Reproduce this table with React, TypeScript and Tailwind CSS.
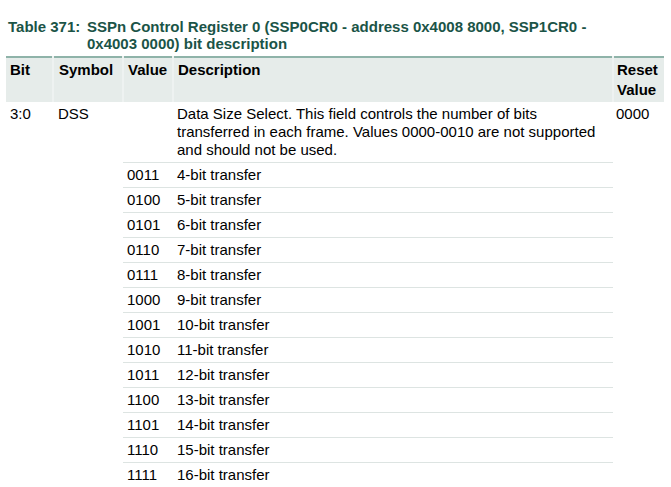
const rows: [string, string][] = [
  ['0011', '4-bit transfer'],
  ['0100', '5-bit transfer'],
  ['0101', '6-bit transfer'],
  ['0110', '7-bit transfer'],
  ['0111', '8-bit transfer'],
  ['1000', '9-bit transfer'],
  ['1001', '10-bit transfer'],
  ['1010', '11-bit transfer'],
  ['1011', '12-bit transfer'],
  ['1100', '13-bit transfer'],
  ['1101', '14-bit transfer'],
  ['1110', '15-bit transfer'],
  ['1111', '16-bit transfer'],
];

export default function App() {
  return (
    <div className="min-h-screen bg-white pl-[6px] pt-[18px] text-[15px] leading-[18px] text-black" style={{ fontFamily: '"Liberation Sans", Arial, sans-serif' }}>
      {/* Caption */}
      <div className="flex pl-[2px] font-bold text-[#1b5447] leading-[17px]">
        <span className="w-[79px] shrink-0">Table 371:</span>
        <span className="w-[520px]">
          SSPn Control Register 0 (SSP0CR0 - address 0x4008 8000, SSP1CR0 - 0x4003 0000) bit description
        </span>
      </div>

      {/* Table */}
      <table className="mt-[4px] w-[658px] table-fixed border-collapse">
        <colgroup>
          <col className="w-[47px]" />
          <col className="w-[70px]" />
          <col className="w-[50px]" />
          <col className="w-[440px]" />
          <col className="w-[51px]" />
        </colgroup>
        <thead>
          <tr className="border-t-2 border-[#8fb3a9] bg-[#e6ecea] align-top font-bold leading-[20px]">
            <th className="border-r-2 border-[#eef2f1] pl-[4px] pt-[2px] pb-[2px] text-left">Bit</th>
            <th className="border-r-2 border-[#eef2f1] pl-[5px] pt-[2px] pb-[2px] text-left">Symbol</th>
            <th className="border-r-2 border-[#eef2f1] pl-[4px] pt-[2px] pb-[2px] text-left">Value</th>
            <th className="border-r-2 border-[#eef2f1] pl-[4px] pt-[2px] pb-[2px] text-left">Description</th>
            <th className="pl-[3px] pt-[2px] pb-[2px] text-left">Reset Value</th>
          </tr>
        </thead>
        <tbody>
          <tr className="align-top">
            <td rowSpan={14} className="pl-[4px] pt-[3px]">3:0</td>
            <td rowSpan={14} className="pl-[5px] pt-[3px]">DSS</td>
            <td className="border-b border-[#dde4e2] pl-[4px] pt-[3px] pb-[3px]"></td>
            <td className="border-b border-[#dde4e2] pl-[4px] pr-[8px] pt-[3px] pb-[3px]">
              Data Size Select. This field controls the number of bits transferred in each frame. Values 0000-0010 are not supported and should not be used.
            </td>
            <td rowSpan={14} className="pl-[3px] pt-[3px]">0000</td>
          </tr>
          {rows.map(([value, desc]) => (
            <tr key={value} className="align-top">
              <td className="border-b border-[#dde4e2] pl-[4px] pt-[3px] pb-[3px]">{value}</td>
              <td className="border-b border-[#dde4e2] pl-[4px] pt-[3px] pb-[3px]">{desc}</td>
            </tr>
          ))}
        </tbody>
      </table>
    </div>
  );
}
